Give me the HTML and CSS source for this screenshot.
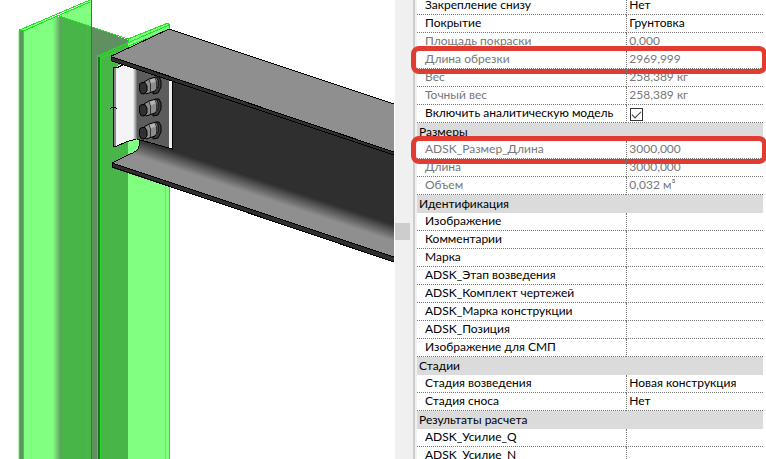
FILE: index.html
```html
<!DOCTYPE html>
<html lang="ru">
<head>
<meta charset="utf-8">
<title>Свойства балки</title>
<link rel="stylesheet" href="styles.css">
</head>
<body>
<main class="workspace">
  <section class="viewport" aria-label="3D вид">
    <svg class="model" viewBox="0 0 394 459" preserveAspectRatio="xMinYMin slice" shape-rendering="crispEdges">
      <defs>
        <linearGradient id="fillet"><stop offset="0" stop-color="#80ff80"/><stop offset="1" stop-color="#5f9a60"/></linearGradient>
        <linearGradient id="clipBend"><stop offset="0" stop-color="#f4f4f6"/><stop offset="1" stop-color="#6a6a6a"/></linearGradient>
        <linearGradient id="webFillet" gradientUnits="userSpaceOnUse" x1="200" y1="160" x2="195" y2="175"><stop offset="0" stop-color="#2f2f2f"/><stop offset="1" stop-color="#8f8f8f"/></linearGradient>
        <g id="bolt" shape-rendering="geometricPrecision">
          <path d="M15 2l3-2h3l2 4v6l-3 6-5 1z" fill="#3a3a3a" stroke="#000"/>
          <path d="M6 5l5-3 7-2 2 3v7l-3 4-9 3z" fill="#8c8c8c" stroke="#000"/>
          <path d="M11 3l6-2 1 3-6 3z" fill="#b4b4b4"/>
          <path d="M11 2.500l1.500 4.500v8M17 1l1.500 3.500V13" fill="none" stroke="#333"/>
          <path d="M1.500 7L4 5.500h3L9 9v5l-3 3-3-.5-1.500-3z" fill="#303030" stroke="#000"/>
        </g>
      </defs>
      <path d="M61 14L91 0V27L61 17z" fill="#80ff80"/>
      <path d="M20 30L57 15V459H20z" fill="#80ff80"/>
      <path d="M20 31h3V459h-3z" fill="#5b965b"/>
      <path d="M53 17h8V459h-8z" fill="url(#fillet)"/>
      <path d="M61 16L92 27V459H61z" fill="#47b547"/>
      <path d="M92 27L128 40V459H92z" fill="#5f9160"/>
      <path d="M98 56L128 42V459H98z" fill="#47b547"/>
      <path d="M128 39L167 23l3 2V459h-42z" fill="#80ff80"/>
      <path d="M98 57h2V459h-2z" fill="#20702a"/>
      <g fill="none" stroke="#22df22">
        <path d="M19.500 459V30L90 0M23.500 459V31L62 14L90 2M59 16L128 39L168 23l1.500 2V459M97.500 459V56L169 25M100.500 459V58L169 29M20 30l3 1M128 39v4"/>
        <path d="M165.500 170V459M87.500 24V459" opacity=".4"/>
        <path d="M18.500 31V459" opacity=".3"/>
      </g>
      <path d="M91.500 0V459" stroke="#208a24"/>

      <path d="M139 138V69L394 150V257L112 163l16-8q11-4 11-9z" fill="url(#webFillet)"/>
      <path d="M112 163L394 257v5L112 168z" fill="#2f2f2f"/>
      <path d="M139 139v7q0 5-11 9l-16 8L394 257M112 163v4L394 262" fill="none" stroke="#000"/>

      <path d="M135 67L172 80V149L135 139z" fill="#5c5c5c"/>
      <path d="M169 80h3V149h-3z" fill="#eee"/>
      <path d="M172.500 80V149L135 138.500" fill="none" stroke="#000"/>
      <path d="M114 68l7-4h15v74l-10 4-9 4h-3z" fill="#f4f4f6"/>
      <path d="M114 68h2V146h-2z" fill="#888"/>
      <path d="M133 66h4V139h-4z" fill="url(#clipBend)"/>
      <path d="M136 139l-10 3-9 4h-3.500V67.500h4l6-3" fill="none" stroke="#000"/>
      <path d="M110 109l2-2h3l2 2" fill="none" stroke="#000"/>
      <use href="#bolt" x="138" y="77"/>
      <use href="#bolt" x="138" y="99"/>
      <use href="#bolt" x="138" y="122"/>

      <path d="M112 56L394 151V156L112 61z" fill="#2f2f2f"/>
      <path d="M112 56L169 29L394 104V152L112 57z" fill="#8f8f8f"/>
      <path d="M111.500 61V56L169 29L394 104M112 57L394 152M112 61L394 155" fill="none" stroke="#000"/>
    </svg>
  </section>
  <div class="scrollbar"><div class="thumb"></div></div>
  <section class="properties" aria-label="Свойства">
    <table class="grid">
      <colgroup><col class="col-name"><col></colgroup>
      <tbody>
        <tr><th>Закрепление снизу</th><td>Нет</td></tr>
        <tr><th>Покрытие</th><td>Грунтовка</td></tr>
        <tr class="locked"><th>Площадь покраски</th><td>0,000</td></tr>
        <tr class="locked marked"><th>Длина обрезки</th><td>2969,999</td></tr>
        <tr class="locked"><th>Вес</th><td>258,389 кг</td></tr>
        <tr class="locked"><th>Точный вес</th><td>258,389 кг</td></tr>
        <tr><th><label for="analytic">Включить аналитическую модель</label></th><td><input class="tick" type="checkbox" id="analytic" checked></td></tr>
        <tr class="group"><th colspan="2">Размеры</th></tr>
        <tr class="locked marked"><th>ADSK_Размер_Длина</th><td>3000,000</td></tr>
        <tr class="locked"><th>Длина</th><td>3000,000</td></tr>
        <tr class="locked"><th>Объем</th><td>0,032 м³</td></tr>
        <tr class="group"><th colspan="2">Идентификация</th></tr>
        <tr><th>Изображение</th><td></td></tr>
        <tr><th>Комментарии</th><td></td></tr>
        <tr><th>Марка</th><td></td></tr>
        <tr><th>ADSK_Этап возведения</th><td></td></tr>
        <tr><th>ADSK_Комплект чертежей</th><td></td></tr>
        <tr><th>ADSK_Марка конструкции</th><td></td></tr>
        <tr><th>ADSK_Позиция</th><td></td></tr>
        <tr><th>Изображение для СМП</th><td></td></tr>
        <tr class="group"><th colspan="2">Стадии</th></tr>
        <tr><th>Стадия возведения</th><td>Новая конструкция</td></tr>
        <tr><th>Стадия сноса</th><td>Нет</td></tr>
        <tr class="group"><th colspan="2">Результаты расчета</th></tr>
        <tr><th>ADSK_Усилие_Q</th><td></td></tr>
        <tr><th>ADSK_Усилие_N</th><td></td></tr>
      </tbody>
    </table>
  </section>
</main>
</body>
</html>
```
FILE: styles.css
```css
* { box-sizing: border-box; }

body {
  margin: 0;
  background: #fff;
  color: #000;
  font: 12px/16px Lato, "Noto Sans", sans-serif;
}

.workspace {
  display: grid;
  grid-template-columns: minmax(0, 395fr) 18px minmax(0, 353fr);
  height: 100vh;
  overflow: hidden;
}

.viewport { min-height: 0; padding-right: 1px; overflow: hidden; }
.model { display: block; width: 100%; height: 100%; }

.scrollbar { background: #f0f0f0; padding-right: 3px; }
.thumb { height: 17px; margin-top: 223px; background: #cdcdcd; }

.properties {
  min-height: 0;
  padding: 0 3px 0 2px;
  border-left: 2px solid #cdcdcd;
  box-shadow: inset 2px 0 #f0f0f0;
}

.grid {
  width: 100%;
  margin-top: -3px;
  table-layout: fixed;
  border-collapse: separate;
  border-spacing: 0;
}
.col-name { width: 60.5%; }

.grid tr { position: relative; height: 18px; }
.grid th, .grid td {
  height: 18px;
  padding: 0 2px;
  border-bottom: 1px dotted #777;
  font-weight: 400;
  text-align: left;
  vertical-align: top;
  white-space: nowrap;
}
.grid th { padding-left: 8px; }
.grid td { border-left: 1px dotted #777; }
.grid .group th { padding-left: 2px; background: #dbdbdb; border-bottom-color: #dbdbdb; vertical-align: bottom; }
.locked { color: #777; }

/* Red frame round a highlighted parameter */
.marked th::after {
  content: "";
  position: absolute;
  inset: -5px -4px -5px -6px;
  border: 5px solid #e03c31;
  border-radius: 8px;
}

.tick {
  display: block;
  appearance: none;
  width: 13px;
  height: 13px;
  margin: 3px 0 0 1px;
  border: 1px solid #333;
  background: #fff;
}
.tick:checked::after {
  content: "";
  display: block;
  width: 8px;
  height: 4px;
  margin: 2px 1px;
  border: solid #333;
  border-width: 0 0 1px 1px;
  transform: rotate(-45deg);
}
```
